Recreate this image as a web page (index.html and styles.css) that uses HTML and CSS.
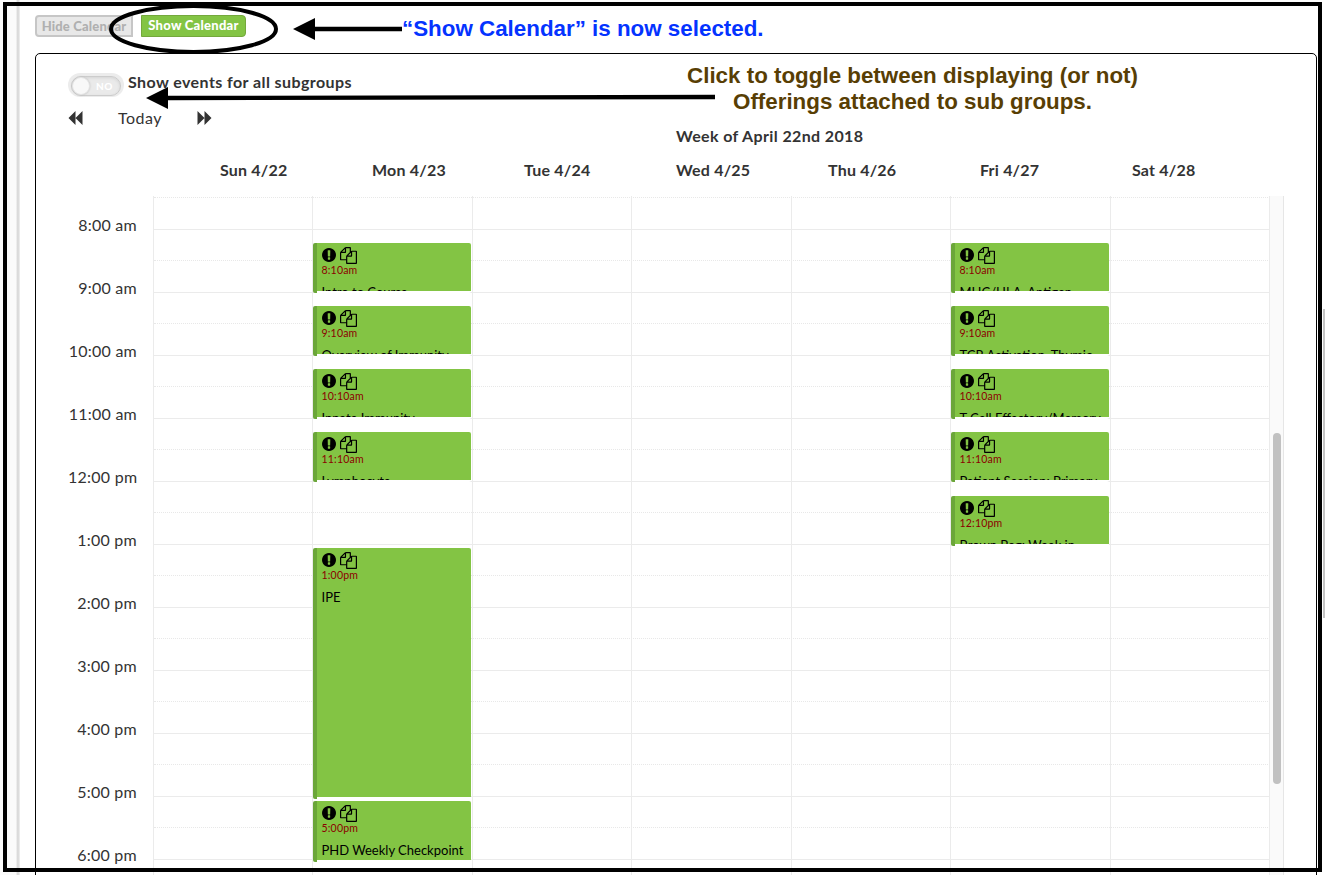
FILE: index.html
```html
<!DOCTYPE html>
<html lang="en">
<head>
<meta charset="utf-8">
<title>Calendar</title>
<link rel="stylesheet" href="styles.css">
</head>
<body>
<svg width="0" height="0" class="defs">
  <symbol id="alert" viewBox="128 128 1536 1536"><path d="M896 128q209 0 385.500 103t279.500 279.500 103 385.500-103 385.500-279.500 279.500-385.500 103-385.500-103-279.500-279.500-103-385.500 103-385.500 279.500-279.500 385.500-103zm128 1247v-190q0-14-9-23.500t-22-9.500h-192q-13 0-23 10t-10 23v190q0 13 10 23t23 10h192q13 0 22-9.500t9-23.500zm-2-344l18-621q0-12-10-18-10-8-24-8h-220q-14 0-24 8-10 6-10 18l17 621q0 10 10 17.500t24 7.500h185q14 0 23.500-7.500t10.500-17.500z"/></symbol>
  <symbol id="copy" viewBox="0 0 1792 1792"><path d="M1696 384q40 0 68 28t28 68v1216q0 40-28 68t-68 28h-960q-40 0-68-28t-28-68v-288h-544q-40 0-68-28t-28-68v-672q0-40 20-88t48-76l408-408q28-28 76-48t88-20h416q40 0 68 28t28 68v328q68-40 128-40h416zm-544 213l-299 299h299v-299zm-640-384l-299 299h299v-299zm196 647l316-316v-416h-384v416q0 40-28 68t-68 28h-416v640h512v-256q0-40 20-88t48-76zm956 804v-1152h-384v416q0 40-28 68t-68 28h-416v640h896z"/></symbol>
</svg>
<div class="page">
  <div class="rail"></div>
  <main class="main">
    <div class="buttons">
      <button class="btn btn-off">Hide Calendar</button>
      <button class="btn btn-on">Show Calendar</button>
    </div>
    <section class="panel">
      <div class="toggle-row">
        <div class="toggle"><div class="track"><span class="knob"></span><span class="no">NO</span></div></div>
        <span class="toggle-label">Show events for all subgroups</span>
      </div>
      <div class="nav">
        <svg class="nav-icon" viewBox="0 0 14 14"><path d="M7 0v14L0 7zM14 0v14L7 7z"/></svg>
        <span class="today">Today</span>
        <svg class="nav-icon" viewBox="0 0 14 14"><path d="M0 0v14l7-7zM7 0v14l7-7z"/></svg>
      </div>
      <div class="week">Week of April 22nd 2018</div>
      <div class="days">
        <span>Sun 4/22</span><span>Mon 4/23</span><span>Tue 4/24</span><span>Wed 4/25</span><span>Thu 4/26</span><span>Fri 4/27</span><span>Sat 4/28</span>
      </div>
      <div class="calendar">
        <div class="hours">
          <span>8:00 am</span><span>9:00 am</span><span>10:00 am</span><span>11:00 am</span><span>12:00 pm</span><span>1:00 pm</span><span>2:00 pm</span><span>3:00 pm</span><span>4:00 pm</span><span>5:00 pm</span><span>6:00 pm</span>
        </div>
        <div class="grid" id="grid"></div>
        <div class="scroll"><div class="thumb"></div></div>
      </div>
    </section>
  </main>
  <div class="page-thumb"></div>
</div>
<svg class="marks" viewBox="0 0 1325 875">
  <rect x="5" y="4" width="1315" height="866" fill="none" stroke="#000" stroke-width="4"/>
  <ellipse cx="193.500" cy="29" rx="82.500" ry="23" fill="none" stroke="#000" stroke-width="4"/>
  <path d="M314 29H402M167 98L715 97" stroke="#000" stroke-width="4.300"/>
  <path d="M293 29l22-11v22zM146 98l22-11v22z"/>
</svg>
<div class="note note-blue">“Show Calendar” is now selected.</div>
<div class="note note-brown"><div>Click to toggle between displaying (or not)</div><div>Offerings attached to sub groups.</div></div>
<script src="calendar.js"></script>
</body>
</html>
```
FILE: styles.css
```css
* { box-sizing: border-box; }
html, body { margin: 0; height: 875px; overflow: hidden; background: #fff; }
body { position: relative; font-family: Lato, "Open Sans", sans-serif; color: #333; }
.defs { position: absolute; }
.page { display: flex; width: 1325px; height: 875px; overflow: hidden; }
.rail { width: 20px; flex: none; background: linear-gradient(90deg, #fbfbfb 0 16px, #e0e0e0 17px, #d6d6d6 18px, #f2f2f2 20px); }
.main { width: 1297px; flex: none; padding: 15px 0 0 15px; }
.buttons { display: flex; gap: 8px; height: 22px; }
.btn { height: 22px; padding: 0; border: 1px solid #74a83c; font: 900 13px/19px Lato, sans-serif; white-space: nowrap; }
.btn-off { width: 98px; border: 2px solid #c6c6c6; border-radius: 4px 0 0 4px; background: #e8e8e8; color: #b0b0b0; line-height: 17px; letter-spacing: 0.16px; }
.btn-on { width: 105px; padding-bottom: 1px; border-radius: 0 4px 4px 0; background: #83c444; color: #fff; letter-spacing: 0.26px; }
.panel { margin-top: 16px; height: 850px; border: 1px solid #000; border-radius: 5px; padding: 19px 0 0 32px; }
.toggle-row { display: flex; gap: 4px; height: 26px; }
.toggle { width: 56px; height: 24px; padding: 3px 3px 0; border-radius: 12px; background: #ececec; }
.track { display: flex; align-items: center; height: 20px; border: 1px solid #ccc; border-radius: 10px; background: #eaeaea; box-shadow: inset 0 1px 3px #d4d4d4; }
.knob { width: 18px; height: 18px; border-radius: 50%; background: #f8f8f8; border: 1px solid #e4e4e4; box-shadow: 0 0 2px #bbb; }
.no { margin-left: 6px; font-size: 10px; font-weight: 900; color: #fff; letter-spacing: 0.5px; }
.toggle-label { font-weight: 700; font-size: 16px; line-height: 17px; letter-spacing: 0.42px; white-space: nowrap; }
.nav { display: flex; align-items: center; height: 20px; margin-top: 9px; }
.nav-icon { width: 15px; height: 14px; fill: #333; }
.today { width: 44px; margin: 0 35px; font-size: 16px; line-height: 20px; letter-spacing: 0.5px; white-space: nowrap; }
.week { margin: -2px 0 0 608px; font-weight: 700; font-size: 16px; line-height: 20px; letter-spacing: 0.37px; }
.days { display: grid; grid-template-columns: repeat(7, 152px); margin: 14px 0 0 152px; font-weight: 700; font-size: 16px; line-height: 20px; letter-spacing: 0.2px; }
.calendar { display: flex; height: 690px; margin-top: 16px; }
.hours { width: 85px; padding: 19px 16px 0 0; flex: none; text-align: right; font-size: 16px; line-height: 20px; letter-spacing: 0.25px; white-space: nowrap; }
.hours span { display: block; height: 63px; }
.grid { position: relative; width: 1117px; flex: none; overflow: hidden; border-left: 1px solid #ebebeb; }
.slots { padding-top: 1px; }
.half { height: 31px; border-top: 1px dotted #e8e8e8; }
.hour { height: 63px; border-top: 1px solid #ebebeb; padding-top: 30px; }
.half.first { height: 32px; }
.columns { position: absolute; inset: 0 -2px 0 -0.500px; display: grid; grid-template-columns: repeat(7, 159.500px); }
.day { position: relative; border-right: 1px solid #ebebeb; }
.event { position: absolute; left: 0; width: 158px; border-left: 4px solid #6ba639; border-radius: 2px; background: #fff; box-shadow: 0 -1px 0 #fff; color: #000; }
.body { height: calc(100% - 2px); padding: 3px 0 0 4.500px; border-radius: 0 2px 0 0; overflow: hidden; background: #83c444; }
.icons { display: flex; align-items: center; gap: 4px; height: 18px; }
.alert { width: 14px; height: 14px; }
.copy { width: 17px; height: 17px; }
.time { height: 13px; font-size: 10.500px; line-height: 13px; color: #8b0000; letter-spacing: 0.2px; }
.title { margin-top: 7px; font-size: 13px; line-height: 16px; white-space: nowrap; }
.scroll { width: 15px; height: 690px; flex: none; background: #fafafa; border-left: 1px solid #e6e6e6; border-right: 1px solid #e6e6e6; padding: 237px 0 0 3px; margin-left: -1px; }
.thumb { width: 8px; height: 351px; border-radius: 4px; background: #c1c1c1; }
.page-thumb { margin: 309px 0 0 6px; width: 2px; height: 309px; flex: none; background: #c4c4c4; }
.marks { position: absolute; left: 0; top: 0; width: 1325px; height: 875px; }
.note { position: absolute; font-family: "Liberation Sans", Arial, sans-serif; font-weight: 700; font-size: 22.360px; line-height: 26px; white-space: nowrap; }
.note-blue { left: 402px; top: 16px; color: #0433ff; }
.note-brown { left: 687px; top: 63px; width: 451px; text-align: center; color: #583e04; }
```
FILE: calendar.js
```js
// Each event: top offset, height, start time, title.
const events = {
  1: [
    [47, 50, '8:10am', 'Intro to Course'],
    [110, 50, '9:10am', 'Overview of Immunity'],
    [173, 50, '10:10am', 'Innate Immunity'],
    [236, 50, '11:10am', 'Lymphocyte'],
    [352, 251, '1:00pm', 'IPE'],
    [605, 61, '5:00pm', 'PHD Weekly Checkpoint']
  ],
  5: [
    [47, 50, '8:10am', 'MHC/HLA, Antigen'],
    [110, 50, '9:10am', 'TCR Activation, Thymic'],
    [173, 50, '10:10am', 'T Cell Effectory/Memory'],
    [236, 50, '11:10am', 'Patient Session: Primary'],
    [300, 50, '12:10pm', 'Brown Bag: Week in']
  ]
};

const card = ([top, height, time, title]) => `
  <div class="event" style="top:${top}px;height:${height}px"><div class="body">
    <div class="icons"><svg class="alert"><use href="#alert"/></svg><svg class="copy"><use href="#copy"/></svg></div>
    <div class="time">${time}</div>
    <div class="title">${title}</div>
  </div></div>`;

let slots = '<div class="half first"></div>';
for (let i = 0; i < 11; i++) slots += '<div class="hour"><div class="half"></div></div>';

let days = '';
for (let d = 0; d < 7; d++) days += `<div class="day">${(events[d] || []).map(card).join('')}</div>`;

document.getElementById('grid').innerHTML =
  `<div class="slots">${slots}</div><div class="columns">${days}</div>`;
```
